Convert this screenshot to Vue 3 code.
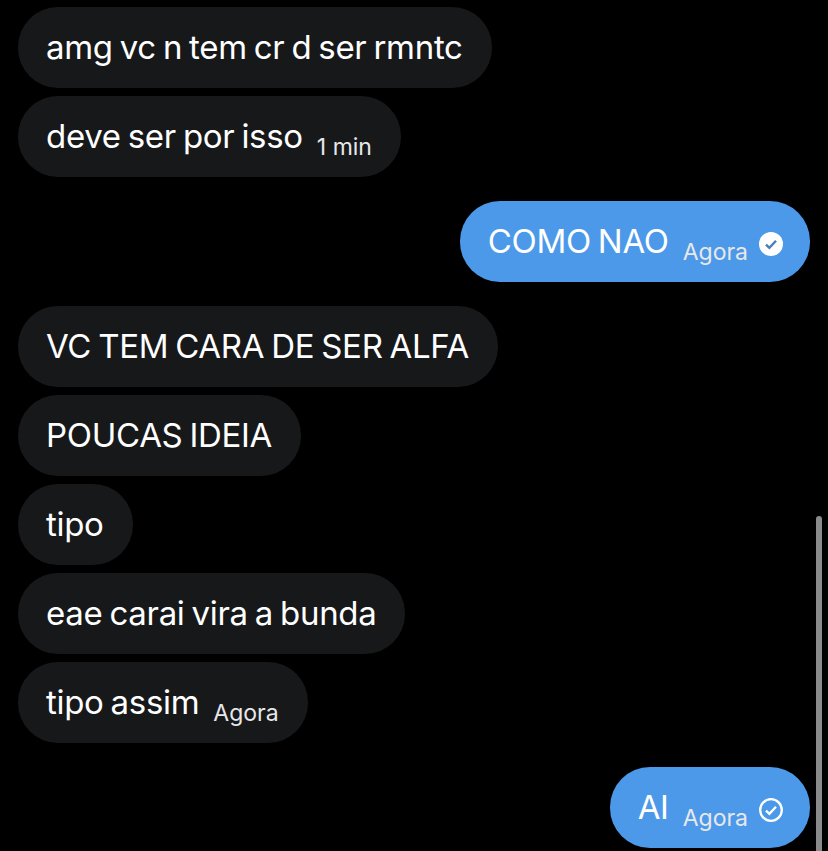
<script setup>
const groups = [
  {
    mine: false,
    messages: [
      { text: 'amg vc n tem cr d ser rmntc' },
      { text: 'deve ser por isso', time: '1 min' },
    ],
  },
  {
    mine: true,
    messages: [{ text: 'COMO NAO', time: 'Agora', status: 'read' }],
  },
  {
    mine: false,
    messages: [
      { text: 'VC TEM CARA DE SER ALFA' },
      { text: 'POUCAS IDEIA' },
      { text: 'tipo' },
      { text: 'eae carai vira a bunda' },
      { text: 'tipo assim', time: 'Agora' },
    ],
  },
  {
    mine: true,
    messages: [{ text: 'AI', time: 'Agora', status: 'sent' }],
  },
]
</script>

<template>
  <div class="chat">
    <div
      v-for="(group, i) in groups"
      :key="i"
      class="group"
      :class="{ mine: group.mine }"
    >
      <div v-for="msg in group.messages" :key="msg.text" class="bubble">
        <span class="text">{{ msg.text }}</span>
        <span v-if="msg.time" class="time">{{ msg.time }}</span>
        <svg v-if="msg.status === 'read'" class="status" viewBox="0 0 24 24">
          <circle cx="12" cy="12" r="12" fill="#fff" />
          <path d="M7 12.6l3.4 3.3 6.6-7.2" fill="none" stroke="#4c7fb8" stroke-width="2.4" />
        </svg>
        <svg v-if="msg.status === 'sent'" class="status" viewBox="0 0 24 24">
          <circle cx="12" cy="12" r="10.8" fill="none" stroke="#fff" stroke-width="2.3" />
          <path d="M7 12.6l3.4 3.3 6.6-7.2" fill="none" stroke="#fff" stroke-width="2.3" />
        </svg>
      </div>
    </div>
    <div class="scrollbar"></div>
  </div>
</template>

<style>
html,
body {
  margin: 0;
  background: #000;
}
</style>

<style scoped>
.chat {
  position: relative;
  box-sizing: border-box;
  height: 851px;
  overflow: hidden;
  padding: 7px 18px 0;
  background: #000;
  color: #fff;
  font-family: Inter, "Liberation Sans", sans-serif;
  display: flex;
  flex-direction: column;
  gap: 24px;
}

.group {
  display: flex;
  flex-direction: column;
  align-items: flex-start;
  gap: 8px;
}

.group.mine {
  align-items: flex-end;
}

.bubble {
  box-sizing: border-box;
  height: 81px;
  padding: 0 29px 0 28px;
  border-radius: 40px;
  background: #17181a;
  display: flex;
  align-items: center;
}

.mine .bubble {
  padding-right: 27px;
  background: #4c99e9;
}

.text {
  margin-bottom: 1px;
  font-size: 33px;
  font-weight: 400;
  letter-spacing: -0.3px;
  word-spacing: -2px;
  white-space: nowrap;
}

.time {
  margin-left: 14px;
  margin-top: 20px;
  font-size: 23px;
  color: #e8e8ea;
  white-space: nowrap;
}

.status {
  width: 24px;
  height: 24px;
  margin-left: 11px;
  margin-top: 4px;
}

.scrollbar {
  position: absolute;
  top: 516px;
  right: 6px;
  bottom: 0;
  width: 6px;
  border-radius: 3px 3px 0 0;
  background: #8a8a8a;
}
</style>
